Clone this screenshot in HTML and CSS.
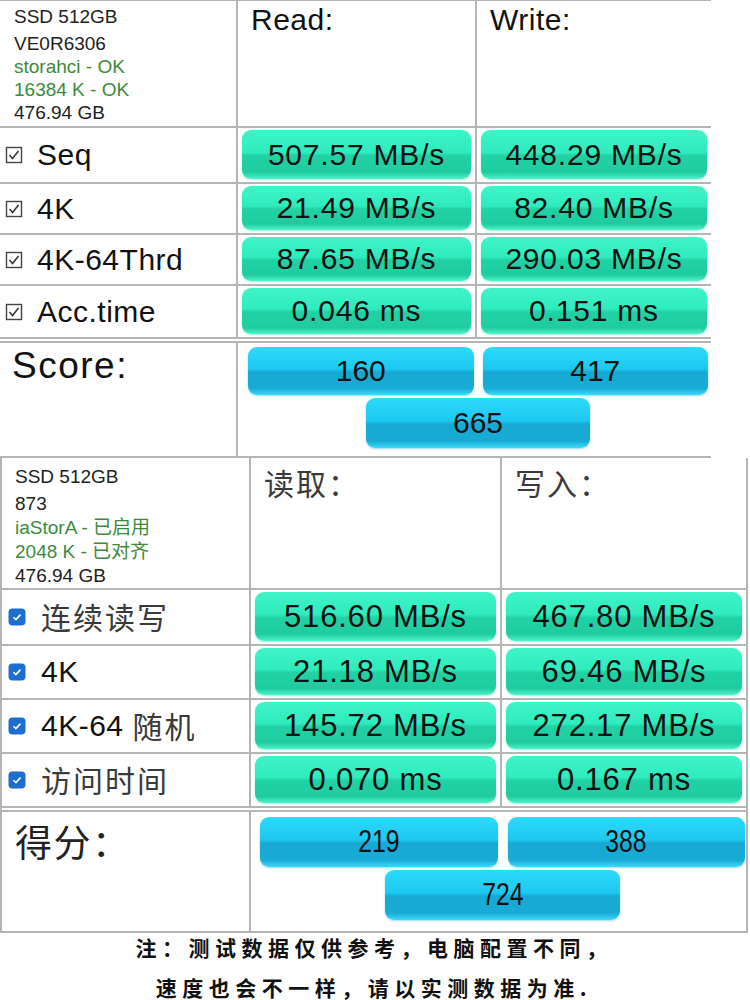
FILE: index.html
```html
<!DOCTYPE html>
<html lang="zh-CN">
<head>
    <meta charset="UTF-8">
    <meta name="viewport" content="width=device-width, initial-scale=1.0">
    <title>AS SSD Benchmark</title>
    <link rel="stylesheet" href="styles.css">
</head>
<body>
    <!-- English result -->
    <div class="panel panel-en">
        <div class="row head">
            <div class="cell info">
                <div class="first-line">SSD 512GB</div>
                <div>VE0R6306</div>
                <div class="ok">storahci - OK</div>
                <div class="ok">16384 K - OK</div>
                <div>476.94 GB</div>
            </div>
            <div class="cell title">Read:</div>
            <div class="cell title">Write:</div>
        </div>
        <div class="row test first">
            <div class="cell label"><svg class="chk" viewBox="0 0 18 18"><rect x="1.5" y="1.5" width="15" height="15" fill="none" stroke="#444" stroke-width="1.4"/><path d="M4.5 9l3 3.5 6-7.5" fill="none" stroke="#333" stroke-width="1.5"/></svg>Seq</div>
            <div class="cell"><div class="bar green">507.57 MB/s</div></div>
            <div class="cell"><div class="bar green">448.29 MB/s</div></div>
        </div>
        <div class="row test">
            <div class="cell label"><svg class="chk" viewBox="0 0 18 18"><rect x="1.5" y="1.5" width="15" height="15" fill="none" stroke="#444" stroke-width="1.4"/><path d="M4.5 9l3 3.5 6-7.5" fill="none" stroke="#333" stroke-width="1.5"/></svg>4K</div>
            <div class="cell"><div class="bar green">21.49 MB/s</div></div>
            <div class="cell"><div class="bar green">82.40 MB/s</div></div>
        </div>
        <div class="row test">
            <div class="cell label"><svg class="chk" viewBox="0 0 18 18"><rect x="1.5" y="1.5" width="15" height="15" fill="none" stroke="#444" stroke-width="1.4"/><path d="M4.5 9l3 3.5 6-7.5" fill="none" stroke="#333" stroke-width="1.5"/></svg>4K-64Thrd</div>
            <div class="cell"><div class="bar green">87.65 MB/s</div></div>
            <div class="cell"><div class="bar green">290.03 MB/s</div></div>
        </div>
        <div class="row test last">
            <div class="cell label"><svg class="chk" viewBox="0 0 18 18"><rect x="1.5" y="1.5" width="15" height="15" fill="none" stroke="#444" stroke-width="1.4"/><path d="M4.5 9l3 3.5 6-7.5" fill="none" stroke="#333" stroke-width="1.5"/></svg>Acc.time</div>
            <div class="cell"><div class="bar green">0.046 ms</div></div>
            <div class="cell"><div class="bar green">0.151 ms</div></div>
        </div>
        <div class="row score">
            <div class="cell score-label">Score:</div>
            <div class="cell scores">
                <div class="bar blue">160</div>
                <div class="bar blue">417</div>
                <div class="bar blue total">665</div>
            </div>
        </div>
    </div>

    <!-- Chinese result -->
    <div class="panel panel-cn">
        <div class="row head">
            <div class="cell info">
                <div class="first-line">SSD 512GB</div>
                <div>873</div>
                <div class="ok">iaStorA - 已启用</div>
                <div class="ok">2048 K - 已对齐</div>
                <div>476.94 GB</div>
            </div>
            <div class="cell title cjk">读取：</div>
            <div class="cell title cjk">写入：</div>
        </div>
        <div class="row test first">
            <div class="cell label"><svg class="chk" viewBox="0 0 18 18"><rect x="0.5" y="0.5" width="17" height="17" rx="4" fill="#1c6fd0"/><path d="M5.5 9.2l2.4 2.4 4.6-5" fill="none" stroke="#fff" stroke-width="1.6"/></svg><span class="cjk">连续读写</span></div>
            <div class="cell"><div class="bar green">516.60 MB/s</div></div>
            <div class="cell"><div class="bar green">467.80 MB/s</div></div>
        </div>
        <div class="row test">
            <div class="cell label"><svg class="chk" viewBox="0 0 18 18"><rect x="0.5" y="0.5" width="17" height="17" rx="4" fill="#1c6fd0"/><path d="M5.5 9.2l2.4 2.4 4.6-5" fill="none" stroke="#fff" stroke-width="1.6"/></svg>4K</div>
            <div class="cell"><div class="bar green">21.18 MB/s</div></div>
            <div class="cell"><div class="bar green">69.46 MB/s</div></div>
        </div>
        <div class="row test">
            <div class="cell label"><svg class="chk" viewBox="0 0 18 18"><rect x="0.5" y="0.5" width="17" height="17" rx="4" fill="#1c6fd0"/><path d="M5.5 9.2l2.4 2.4 4.6-5" fill="none" stroke="#fff" stroke-width="1.6"/></svg>4K-64&nbsp;<span class="cjk">随机</span></div>
            <div class="cell"><div class="bar green">145.72 MB/s</div></div>
            <div class="cell"><div class="bar green">272.17 MB/s</div></div>
        </div>
        <div class="row test last">
            <div class="cell label"><svg class="chk" viewBox="0 0 18 18"><rect x="0.5" y="0.5" width="17" height="17" rx="4" fill="#1c6fd0"/><path d="M5.5 9.2l2.4 2.4 4.6-5" fill="none" stroke="#fff" stroke-width="1.6"/></svg><span class="cjk">访问时间</span></div>
            <div class="cell"><div class="bar green">0.070 ms</div></div>
            <div class="cell"><div class="bar green">0.167 ms</div></div>
        </div>
        <div class="row score">
            <div class="cell score-label cjk">得分：</div>
            <div class="cell scores">
                <div class="bar blue"><span class="narrow">219</span></div>
                <div class="bar blue"><span class="narrow">388</span></div>
                <div class="bar blue total"><span class="narrow">724</span></div>
            </div>
        </div>
    </div>

    <div class="note">
        <div class="note-line">注：测试数据仅供参考，电脑配置不同，</div>
        <div class="note-line second">速度也会不一样，请以实测数据为准.</div>
    </div>
</body>
</html>
```

FILE: styles.css
```css
* {
    box-sizing: border-box;
}

body {
    margin: 0;
    width: 750px;
    background-color: #fff;
    color: #111;
    font-family: "Liberation Sans", Arial, sans-serif;
}

.cjk {
    font-family: "Noto Sans CJK SC", sans-serif;
    color: #3a3a3a;
}

/* таблицы */
.panel-en {
    width: 711px;
    border-top: 1px solid #b5b5b5;
}

.panel-cn {
    width: 748px;
    border-left: 2px solid #b5b5b5;
    border-right: 2px solid #b5b5b5;
}

.row {
    display: grid;
    border-bottom: 2px solid #b5b5b5;
}

.panel-en .row {
    grid-template-columns: 238px 239px 234px;
}

.panel-cn .row {
    grid-template-columns: 249px 251px 244px;
}

.cell {
    border-right: 2px solid #b5b5b5;
    min-width: 0;
}

.cell:last-child {
    border-right: none;
}

.row.test .cell {
    padding: 2px 4px 3px 4px;
}

.row.test.last {
    border-bottom: 6px double #b5b5b5;
}

.panel-en .head { height: 127px; }
.panel-en .test { height: 51px; }
.panel-en .test.first { height: 56px; }
.panel-en .test.last { height: 57px; }
.panel-en .score { height: 115px; }

.panel-cn .head { height: 132px; }
.panel-cn .test { height: 54px; }
.panel-cn .test.first { height: 56px; }
.panel-cn .test.last { height: 58px; }
.panel-cn .score { height: 121px; }

/* шапка */
.info {
    padding: 4px 0 0 14px;
    font-size: 19px;
    line-height: 23px;
    color: #222;
}

.info .first-line {
    margin-bottom: 4px;
}

.panel-cn .info {
    padding: 7px 0 0 13px;
    font-size: 19px;
    line-height: 24px;
}

.panel-cn .info .first-line {
    margin-bottom: 3px;
}

.info .ok {
    color: #3d8a3d;
}

.title {
    padding: 2px 0 0 13px;
    font-size: 30px;
    letter-spacing: 0.5px;
}

.title.cjk {
    padding: 2px 0 0 13px;
    font-size: 30px;
    letter-spacing: 2px;
}

/* строки тестов */
.row.test .label {
    display: flex;
    align-items: center;
    padding: 0 0 0 5px;
    font-size: 30px;
    letter-spacing: 0.5px;
}

.chk {
    width: 18px;
    height: 18px;
    margin-right: 14px;
    flex-shrink: 0;
}

.panel-cn .chk {
    margin-left: 1px;
    margin-right: 15px;
}

.label .cjk {
    font-size: 30px;
    letter-spacing: 2px;
    margin-top: -3px;
}

.bar {
    height: 100%;
    display: flex;
    align-items: center;
    justify-content: center;
    border-radius: 9px;
    font-size: 30px;
    letter-spacing: 0.8px;
    color: #111;
}

.panel-cn .bar {
    font-size: 31px;
    letter-spacing: 0.8px;
}

.green {
    background: linear-gradient(#3ff4c8 0%, #2febbd 46%, #21d2a5 52%, #1fcc9f 86%, #4ff2cb 100%);
    box-shadow: 0 1px 2px rgba(40, 220, 170, 0.45);
}

.blue {
    background: linear-gradient(#2cdafb 0%, #1dc8f0 46%, #16a9d4 52%, #17abd6 86%, #3fd9fa 100%);
    box-shadow: 0 1px 2px rgba(30, 180, 230, 0.45);
}

/* итог */
.score-label {
    padding: 2px 0 0 12px;
    font-size: 37px;
    letter-spacing: 1.5px;
}

.score-label.cjk {
    padding: 2px 0 0 13px;
    font-size: 37px;
    color: #222;
}

.scores {
    grid-column: 2 / 4;
    display: grid;
    grid-template-columns: 1fr 1fr;
    grid-template-rows: 48px 50px;
    column-gap: 9px;
    row-gap: 3px;
    padding: 4px 3px 0 10px;
}

.panel-cn .scores {
    grid-template-rows: 50px 50px;
    column-gap: 10px;
    padding: 5px 1px 0 9px;
}

.scores .bar {
    font-size: 30px;
    letter-spacing: 0;
}

.panel-cn .scores .bar {
    font-size: 31px;
    letter-spacing: 0;
}

.scores .total {
    grid-column: 1 / 3;
    justify-self: center;
    width: 224px;
}

.panel-cn .scores .total {
    width: 235px;
}

.narrow {
    display: inline-block;
    transform: scaleX(0.8);
}

/* примечание */
.note {
    width: 748px;
    text-align: center;
    font-family: "Noto Sans CJK SC", sans-serif;
    font-weight: bold;
    font-size: 21px;
    letter-spacing: 5.5px;
    color: #111;
}

.note-line {
    margin-top: -2px;
    line-height: 32px;
}

.note-line.second {
    margin-top: 11px;
    line-height: 26px;
}
```
